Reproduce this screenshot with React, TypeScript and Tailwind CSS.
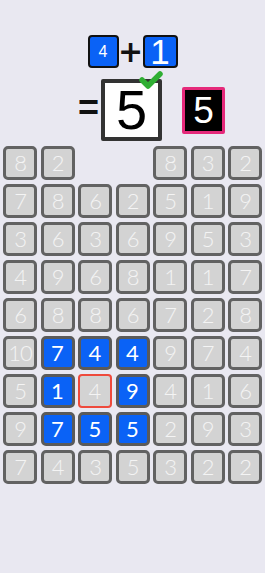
import React from 'react';

type Cell = { v: number | null; kind?: 'blue' | 'red' };

const rows: (number | string | null)[][] = [
    [8, 2, null, null, 8, 3, 2],
    [7, 8, 6, 2, 5, 1, 9],
    [3, 6, 3, 6, 9, 5, 3],
    [4, 9, 6, 8, 1, 1, 7],
    [6, 8, 8, 6, 7, 2, 8],
    [10, 'b7', 'b4', 'b4', 9, 7, 4],
    [5, 'b1', 'r4', 'b9', 4, 1, 6],
    [9, 'b7', 'b5', 'b5', 2, 9, 3],
    [7, 4, 3, 5, 3, 2, 2],
];

function parse(raw: number | string | null): Cell {
    if (raw === null) return { v: null };
    if (typeof raw === 'number') return { v: raw };
    return { v: Number(raw.slice(1)), kind: raw[0] === 'b' ? 'blue' : 'red' };
}

function Tile({ cell }: { cell: Cell }) {
    if (cell.v === null) return <div className="h-[34px]" />;
    if (cell.kind === 'blue') {
        return (
            <div className="h-[34px] rounded-[5px] border-[3px] border-[#5a5a5a] bg-[#0a62f6] flex items-center justify-center text-white text-[22px] leading-none">
                {cell.v}
            </div>
        );
    }
    if (cell.kind === 'red') {
        return (
            <div className="h-[34px] rounded-[4px] border-2 border-[#ee4a3c] bg-[#d3d3d3] flex items-center justify-center text-[#f4f4f4] text-[22px] leading-none font-light">
                {cell.v}
            </div>
        );
    }
    return (
        <div className="h-[34px] rounded-[5px] border-[3px] border-[#626262] bg-[#d3d3d3] flex items-center justify-center text-[#f4f4f4] text-[22px] leading-none font-light tracking-tighter">
            {cell.v}
        </div>
    );
}

export default function App() {
    return (
        <div className="w-[265px] h-[573px] bg-[#e9e8f1] overflow-hidden font-['Lato',sans-serif]">
            <div className="pt-[35px] h-[68px] flex justify-center items-start">
                <div className="w-[31px] h-[33px] rounded-[4px] border-[2.5px] border-[#111] bg-[#0a62f6] flex items-center justify-center text-white text-[16px] font-['Liberation_Sans',sans-serif]">
                    4
                </div>
                <div className="w-[24px] h-[33px] flex items-center justify-center text-[30px] leading-none font-bold text-[#111] font-['DejaVu_Sans',sans-serif]">
                    +
                </div>
                <div className="w-[35px] h-[33px] rounded-[4px] border-[2.5px] border-[#111] bg-[#0a62f6] flex items-center justify-center text-white text-[35px] leading-none font-['Liberation_Sans',sans-serif]">
                    1
                </div>
            </div>

            <div className="mt-[11px] pl-[78px] flex items-center font-['Liberation_Sans',sans-serif]">
                <div className="w-[23px] text-[36px] leading-none font-bold text-[#111] -mt-[4px]">=</div>
                <div className="relative w-[61px] h-[62px] border-[4px] border-[#333] rounded-[2px] bg-white flex items-center justify-center text-[56px] leading-none text-black">
                    5
                    <svg
                        className="absolute -top-[13px] -right-[6px]"
                        width="26"
                        height="22"
                        viewBox="0 0 26 22"
                    >
                        <polyline
                            points="4,10 10,16 22,4"
                            fill="none"
                            stroke="#2fae33"
                            strokeWidth="5.5"
                            strokeLinecap="round"
                            strokeLinejoin="round"
                        />
                    </svg>
                </div>
                <div className="ml-[20px] w-[43px] h-[47px] border-[3px] border-[#e5297a] rounded-[2px] bg-black flex items-center justify-center text-white text-[37px] leading-none">
                    5
                </div>
            </div>

            <div className="mt-[5px] px-[3px] grid grid-cols-7 gap-x-[3.5px] gap-y-[4px]">
                {rows.map((row, r) =>
                    row.map((raw, c) => <Tile key={`${r}-${c}`} cell={parse(raw)} />)
                )}
            </div>
        </div>
    );
}
